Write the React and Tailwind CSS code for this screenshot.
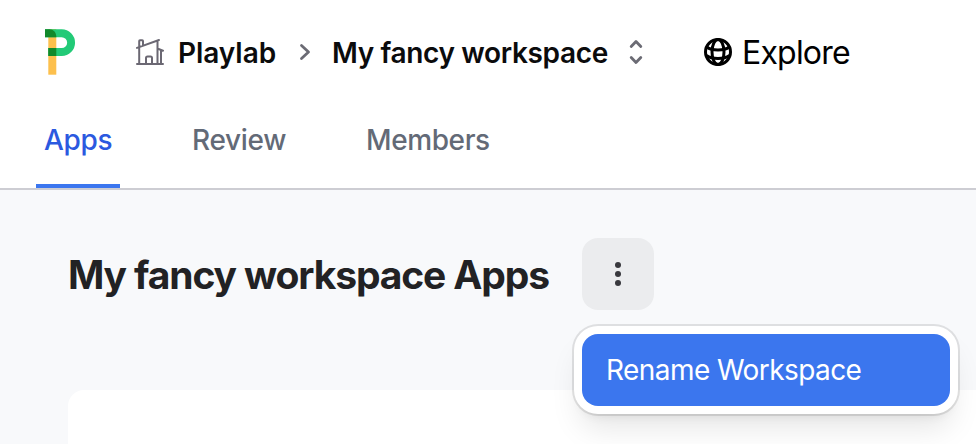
const inter = "font-['Inter',sans-serif]";

function Logo() {
  return (
    <svg className="mt-[29px] h-[46px] w-[32px] shrink-0" viewBox="0 0 32 46" fill="none">
      <path d="M4.300 0h8v45.700h-8z" fill="#fdc04d" />
      <path d="M1 .3h16.700a13.350 13.350 0 0 1 0 26.700H4.300v-7.900h13.400a5.450 5.450 0 0 0 0-10.900H1z" fill="#22ca77" />
      <path d="M1 .3h4.500a6.800 6.800 0 0 1 6.800 6.800v1.100H1zM4.300 19.100h8V27h-8z" fill="#11892b" />
    </svg>
  );
}

function House() {
  return (
    <svg className="h-[28px] w-[28px] shrink-0" viewBox="0 0 28 28" fill="none" stroke="#6b6873" strokeWidth="2" strokeLinecap="round" strokeLinejoin="round">
      <path d="M1 26h26M3.200 26V9.200M1 9.900 23 2M21.500 3v23M22 10.700l5 2M25 12.500V26M3.200 9V3a.8.8 0 0 1 .8-.8h2.200A.8.8 0 0 1 7 3v4.500M10 26v-6a1.500 1.500 0 0 1 1.500-1.500h3A1.500 1.500 0 0 1 16 20v6" />
    </svg>
  );
}

function Globe() {
  return (
    <svg className="h-[28px] w-[28px] shrink-0" viewBox="0 0 28 28" fill="none" stroke="#000" strokeWidth="3">
      <circle cx="14" cy="14" r="12.500" />
      <ellipse cx="14" cy="14" rx="6" ry="12.500" />
      <path d="M2.800 9c5 4 17.400 4 22.400 0M2.500 17.500c5.500 4 17.500 4 23 0" />
    </svg>
  );
}

function Header() {
  return (
    <header className="flex h-[104px] items-start pl-[44px]">
      <Logo />
      <nav className="flex h-[104px] items-center">
        <span className="ml-[60px]"><House /></span>
        <span className="ml-[14px] w-[98px] whitespace-nowrap pt-px text-[28px] font-semibold tracking-[-0.050px] text-[#0b0b0c]">Playlab</span>
        <svg className="ml-[23px] h-[18px] w-[12px] shrink-0" viewBox="0 0 12 18" fill="none" stroke="#6b6b74" strokeWidth="2.800" strokeLinecap="round" strokeLinejoin="round"><path d="m2.500 2.500 7 6.500-7 6.500" /></svg>
        <span className="ml-[21px] w-[277px] whitespace-nowrap pt-px text-[28px] font-semibold tracking-[-0.350px] text-[#0b0b0c]">My fancy workspace</span>
        <svg className="ml-[20px] h-[26px] w-[14px] shrink-0" viewBox="0 0 14 26" fill="none" stroke="#6b6b74" strokeWidth="2.800" strokeLinecap="round" strokeLinejoin="round"><path d="m2.200 7.500 4.800-5 4.800 5M2.200 18.500l4.800 5 4.800-5" /></svg>
        <span className="ml-[61px]"><Globe /></span>
        <span className="ml-[10px] whitespace-nowrap pt-[2px] text-[32px] tracking-[-0.8px]">Explore</span>
      </nav>
    </header>
  );
}

export default function App() {
  return (
    <div className={`${inter} flex h-[444px] w-[976px] flex-col overflow-hidden bg-white text-black`}>
      <Header />
      <div className="flex h-[86px] shrink-0 border-b-2 border-[#cdcdd3] pl-[36px] text-[28px] font-medium text-[#636a77]">
        <div className="h-[84px] w-[84px] whitespace-nowrap border-b-4 border-[#3b76ef] pl-[8px] pt-[15px] tracking-[-0.3px] text-[#2b59e0]">Apps</div>
        <div className="ml-[72px] w-[174px] pt-[15px] tracking-[-0.3px]">Review</div>
        <div className="pt-[15px] tracking-[-0.4px]">Members</div>
      </div>
      <main className="flex flex-1 flex-col bg-[#f8f9fb] pl-[68px] pt-[48px]">
        <div className="flex h-[72px] items-center">
          <h1 className="w-[514px] whitespace-nowrap pt-[2px] text-[39px] font-bold tracking-[-1.120px] text-[#222224]">My fancy workspace Apps</h1>
          <div className="relative">
            <button className="flex h-[72px] w-[72px] items-center justify-center rounded-[16px] bg-[#ebecee]">
              <svg className="h-[26px] w-[8px]" viewBox="0 0 8 26" fill="#38383d"><circle cx="4" cy="4" r="3" /><circle cx="4" cy="13" r="3" /><circle cx="4" cy="22" r="3" /></svg>
            </button>
            <div className="absolute left-[-8px] top-[88px] w-[384px] rounded-[24px] bg-white p-[8px] shadow-[0_0_0_2px_rgba(0,0,0,0.1),0_20px_30px_-6px_rgba(0,0,0,0.1),0_8px_12px_-8px_rgba(0,0,0,0.1)]">
              <div className="flex h-[72px] items-center whitespace-nowrap rounded-[16px] bg-[#3b76ee] pl-[24px] text-[28px] tracking-[-0.570px] text-white">Rename Workspace</div>
            </div>
          </div>
        </div>
        <section className="mt-[80px] flex-1 rounded-tl-[16px] bg-white" />
      </main>
    </div>
  );
}
